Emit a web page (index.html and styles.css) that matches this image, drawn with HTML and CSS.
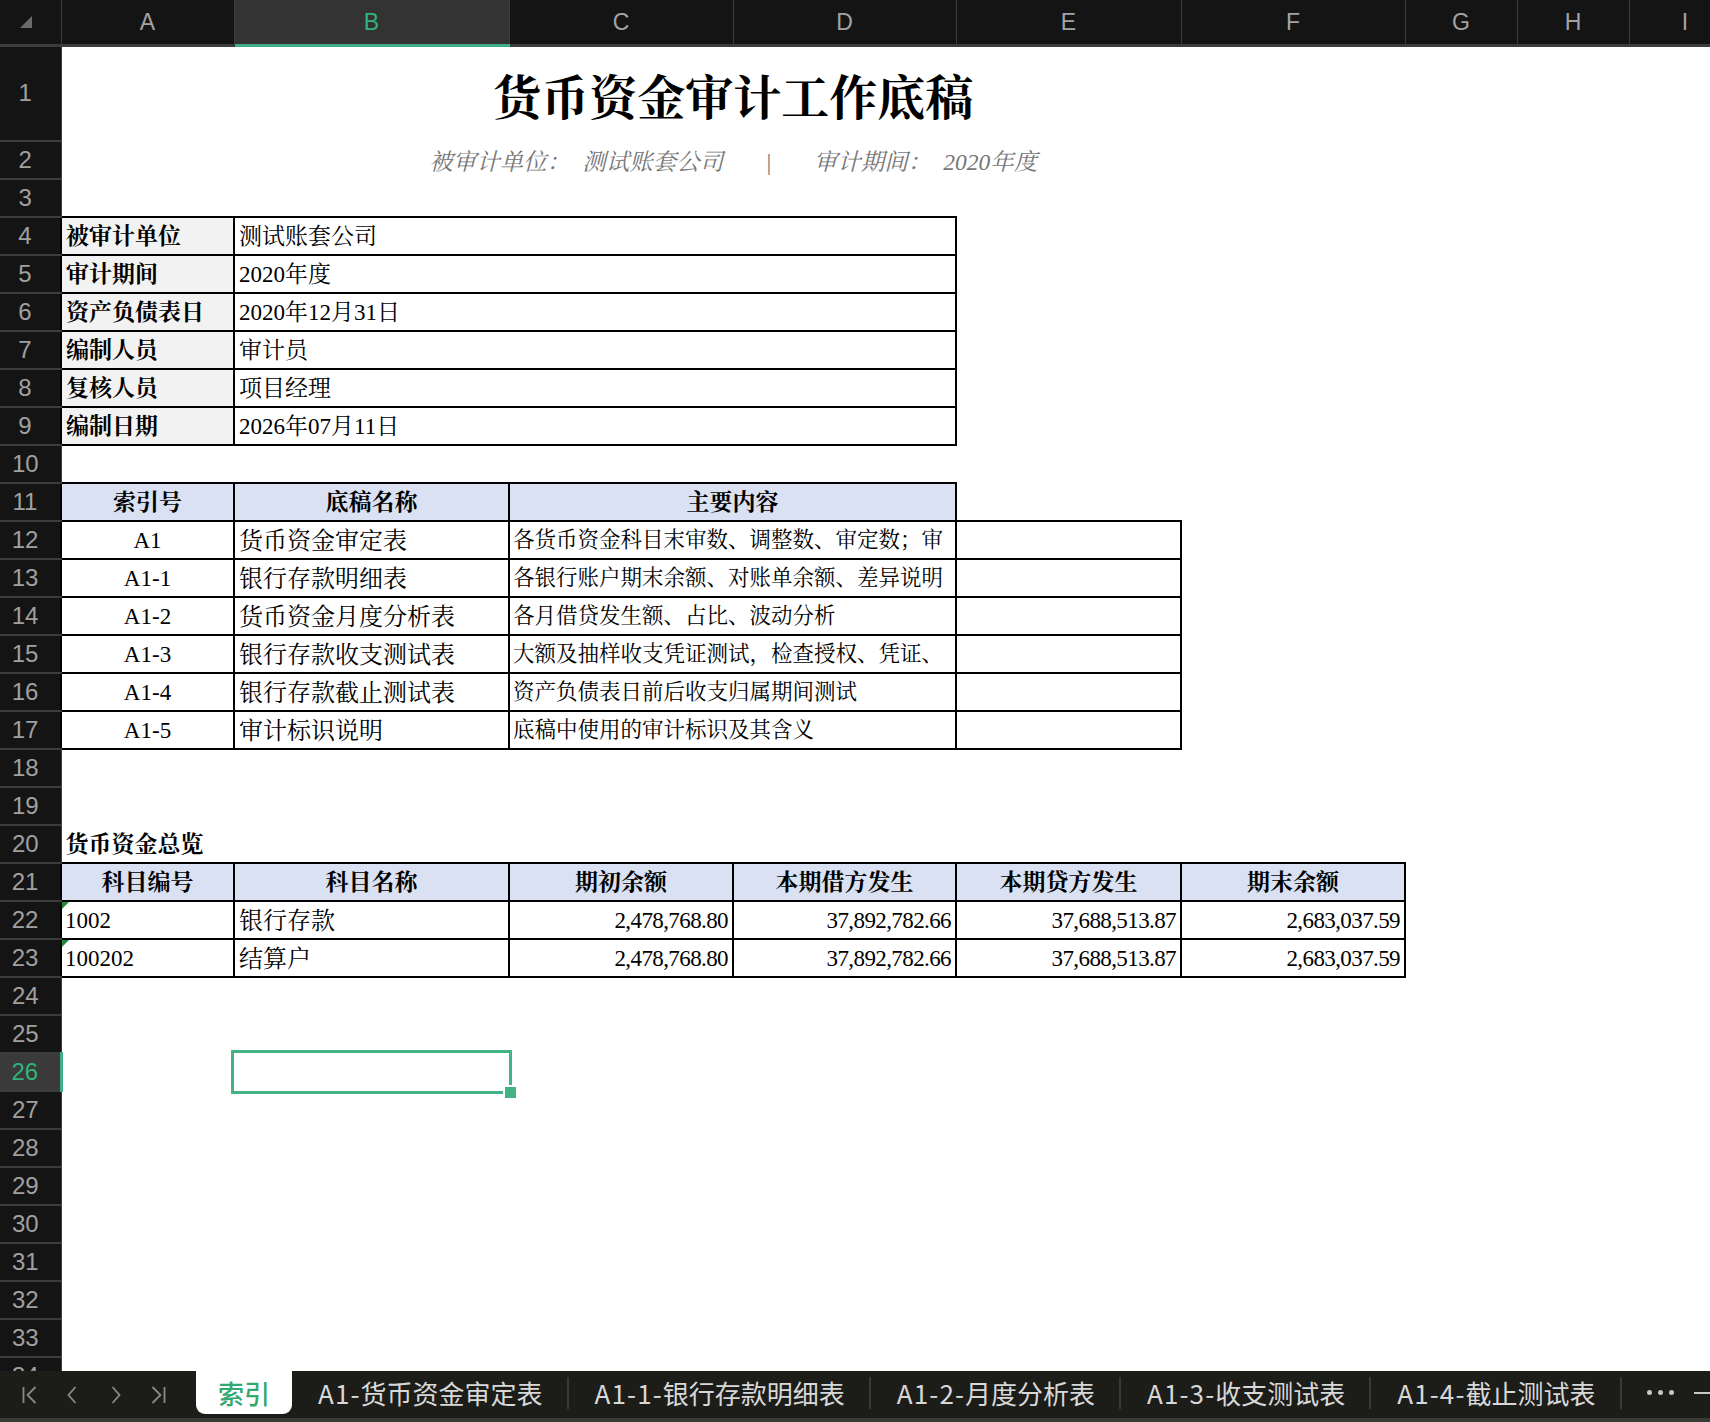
FILE: index.html
```html
<!DOCTYPE html>
<html lang="zh-CN">
<head>
  <meta charset="UTF-8" />
  <meta name="viewport" content="width=device-width, initial-scale=1.0" />
  <title>货币资金审计工作底稿</title>
  <link rel="stylesheet" href="styles.css">
</head>
<body>
  <div class="book">
    <div class="grid-wrap">
      <table class="sheet">
        <colgroup>
          <col class="w-rh"><col class="w-a"><col class="w-b"><col class="w-c"><col class="w-d">
          <col class="w-e"><col class="w-f"><col class="w-g"><col class="w-h"><col class="w-i">
        </colgroup>
        <thead>
          <tr class="colhead">
            <th class="corner"><span class="corner-tri"></span></th>
            <th>A</th><th class="cur">B</th><th>C</th><th>D</th><th>E</th><th>F</th><th>G</th><th>H</th><th>I</th>
          </tr>
        </thead>
        <tbody>
          <tr class="r-title">
            <th class="rh">1</th>
            <td colspan="6" class="title">货币资金审计工作底稿</td><td></td><td></td><td></td>
          </tr>
          <tr>
            <th class="rh">2</th>
            <td colspan="6" class="subtitle"><span>被审计单位：</span><span class="gap">测试账套公司</span><span class="bar">|</span><span>审计期间：</span><span class="gap">2020年度</span></td><td></td><td></td><td></td>
          </tr>
          <tr><th class="rh">3</th><td></td><td></td><td></td><td></td><td></td><td></td><td></td><td></td><td></td></tr>
          <tr><th class="rh">4</th><td class="bx lbl">被审计单位</td><td colspan="3" class="bx">测试账套公司</td><td></td><td></td><td></td><td></td><td></td></tr>
          <tr><th class="rh">5</th><td class="bx lbl">审计期间</td><td colspan="3" class="bx">2020年度</td><td></td><td></td><td></td><td></td><td></td></tr>
          <tr><th class="rh">6</th><td class="bx lbl">资产负债表日</td><td colspan="3" class="bx">2020年12月31日</td><td></td><td></td><td></td><td></td><td></td></tr>
          <tr><th class="rh">7</th><td class="bx lbl">编制人员</td><td colspan="3" class="bx">审计员</td><td></td><td></td><td></td><td></td><td></td></tr>
          <tr><th class="rh">8</th><td class="bx lbl">复核人员</td><td colspan="3" class="bx">项目经理</td><td></td><td></td><td></td><td></td><td></td></tr>
          <tr><th class="rh">9</th><td class="bx lbl">编制日期</td><td colspan="3" class="bx">2026年07月11日</td><td></td><td></td><td></td><td></td><td></td></tr>
          <tr><th class="rh">10</th><td></td><td></td><td></td><td></td><td></td><td></td><td></td><td></td><td></td></tr>
          <tr><th class="rh">11</th><td class="bx hd">索引号</td><td class="bx hd">底稿名称</td><td colspan="2" class="bx hd">主要内容</td><td></td><td></td><td></td><td></td><td></td></tr>
          <tr><th class="rh">12</th><td class="bx ctr">A1</td><td class="bx name">货币资金审定表</td><td colspan="2" class="bx desc">各货币资金科目末审数、调整数、审定数；审</td><td class="bx"></td><td></td><td></td><td></td><td></td></tr>
          <tr><th class="rh">13</th><td class="bx ctr">A1-1</td><td class="bx name">银行存款明细表</td><td colspan="2" class="bx desc">各银行账户期末余额、对账单余额、差异说明</td><td class="bx"></td><td></td><td></td><td></td><td></td></tr>
          <tr><th class="rh">14</th><td class="bx ctr">A1-2</td><td class="bx name">货币资金月度分析表</td><td colspan="2" class="bx desc">各月借贷发生额、占比、波动分析</td><td class="bx"></td><td></td><td></td><td></td><td></td></tr>
          <tr><th class="rh">15</th><td class="bx ctr">A1-3</td><td class="bx name">银行存款收支测试表</td><td colspan="2" class="bx desc">大额及抽样收支凭证测试，检查授权、凭证、</td><td class="bx"></td><td></td><td></td><td></td><td></td></tr>
          <tr><th class="rh">16</th><td class="bx ctr">A1-4</td><td class="bx name">银行存款截止测试表</td><td colspan="2" class="bx desc">资产负债表日前后收支归属期间测试</td><td class="bx"></td><td></td><td></td><td></td><td></td></tr>
          <tr><th class="rh">17</th><td class="bx ctr">A1-5</td><td class="bx name">审计标识说明</td><td colspan="2" class="bx desc">底稿中使用的审计标识及其含义</td><td class="bx"></td><td></td><td></td><td></td><td></td></tr>
          <tr><th class="rh">18</th><td></td><td></td><td></td><td></td><td></td><td></td><td></td><td></td><td></td></tr>
          <tr><th class="rh">19</th><td></td><td></td><td></td><td></td><td></td><td></td><td></td><td></td><td></td></tr>
          <tr><th class="rh">20</th><td class="sec">货币资金总览</td><td></td><td></td><td></td><td></td><td></td><td></td><td></td><td></td></tr>
          <tr><th class="rh">21</th><td class="bx hd">科目编号</td><td class="bx hd">科目名称</td><td class="bx hd">期初余额</td><td class="bx hd">本期借方发生</td><td class="bx hd">本期贷方发生</td><td class="bx hd">期末余额</td><td></td><td></td><td></td></tr>
          <tr><th class="rh">22</th><td class="bx code"><span class="txt-mark"></span>1002</td><td class="bx name">银行存款</td><td class="bx num">2,478,768.80</td><td class="bx num">37,892,782.66</td><td class="bx num">37,688,513.87</td><td class="bx num">2,683,037.59</td><td></td><td></td><td></td></tr>
          <tr><th class="rh">23</th><td class="bx code"><span class="txt-mark"></span>100202</td><td class="bx name">结算户</td><td class="bx num">2,478,768.80</td><td class="bx num">37,892,782.66</td><td class="bx num">37,688,513.87</td><td class="bx num">2,683,037.59</td><td></td><td></td><td></td></tr>
          <tr><th class="rh">24</th><td></td><td></td><td></td><td></td><td></td><td></td><td></td><td></td><td></td></tr>
          <tr><th class="rh">25</th><td></td><td></td><td></td><td></td><td></td><td></td><td></td><td></td><td></td></tr>
          <tr><th class="rh cur">26</th><td></td><td class="sel"><div class="sel-box"></div><div class="sel-handle"></div></td><td></td><td></td><td></td><td></td><td></td><td></td><td></td></tr>
          <tr><th class="rh">27</th><td></td><td></td><td></td><td></td><td></td><td></td><td></td><td></td><td></td></tr>
          <tr><th class="rh">28</th><td></td><td></td><td></td><td></td><td></td><td></td><td></td><td></td><td></td></tr>
          <tr><th class="rh">29</th><td></td><td></td><td></td><td></td><td></td><td></td><td></td><td></td><td></td></tr>
          <tr><th class="rh">30</th><td></td><td></td><td></td><td></td><td></td><td></td><td></td><td></td><td></td></tr>
          <tr><th class="rh">31</th><td></td><td></td><td></td><td></td><td></td><td></td><td></td><td></td><td></td></tr>
          <tr><th class="rh">32</th><td></td><td></td><td></td><td></td><td></td><td></td><td></td><td></td><td></td></tr>
          <tr><th class="rh">33</th><td></td><td></td><td></td><td></td><td></td><td></td><td></td><td></td><td></td></tr>
          <tr><th class="rh">34</th><td></td><td></td><td></td><td></td><td></td><td></td><td></td><td></td><td></td></tr>
        </tbody>
      </table>
    </div>

    <div class="tabbar">
      <div class="tab-nav">
        <svg class="nav-ico" viewBox="0 0 20 24"><path d="M4 4v16M16 4l-8 8 8 8"/></svg>
        <svg class="nav-ico" viewBox="0 0 20 24"><path d="M13 4l-7 8 7 8"/></svg>
        <svg class="nav-ico" viewBox="0 0 20 24"><path d="M7 4l7 8-7 8"/></svg>
        <svg class="nav-ico" viewBox="0 0 20 24"><path d="M4 4l8 8-8 8M16 4v16"/></svg>
      </div>
      <div class="tab active">索引</div>
      <div class="tab"><span class="pre">A1-</span>货币资金审定表</div>
      <span class="sep"></span>
      <div class="tab"><span class="pre">A1-1-</span>银行存款明细表</div>
      <span class="sep"></span>
      <div class="tab"><span class="pre">A1-2-</span>月度分析表</div>
      <span class="sep"></span>
      <div class="tab"><span class="pre">A1-3-</span>收支测试表</div>
      <span class="sep"></span>
      <div class="tab"><span class="pre">A1-4-</span>截止测试表</div>
      <span class="sep"></span>
      <div class="tab more"><i></i><i></i><i></i></div>
      <div class="tab minus"><i></i></div>
    </div>
  </div>
</body>
</html>
```

FILE: styles.css
```css
body {
  margin: 0;
  background: #141414;
  font-family: "Liberation Sans", Arial, sans-serif;
  overflow: hidden;
}
.book {
  width: 1710px;
  height: 1422px;
  display: flex;
  flex-direction: column;
  overflow: hidden;
}
.grid-wrap {
  height: 1371px;
  flex-shrink: 0;
  overflow: hidden;
  background: #fff;
}
.sheet {
  border-collapse: collapse;
  table-layout: fixed;
  width: 1741px;
  font-family: "Liberation Serif", "Noto Serif CJK SC", "Noto Sans CJK SC", serif;
  font-size: 23px;
  color: #000;
}
.w-rh { width: 61px; }
.w-a { width: 173px; }
.w-b { width: 275px; }
.w-c { width: 224px; }
.w-d { width: 223px; }
.w-e { width: 225px; }
.w-f { width: 224px; }
.w-g { width: 112px; }
.w-h { width: 112px; }
.w-i { width: 112px; }

/* column header */
.colhead th {
  height: 44px;
  padding: 0;
  background: #141414;
  color: #a3a3a3;
  font-family: "Liberation Sans", Arial, sans-serif;
  font-weight: normal;
  font-size: 23px;
  border-right: 1px solid #3c3c3c;
  border-bottom: 3px solid #3c3c3c;
}
.colhead th.cur {
  background: #333;
  color: #2fb47b;
  border-bottom: 3px solid #3fae84;
}
.colhead th.corner {
  position: relative;
}
.corner-tri {
  position: absolute;
  left: 20px;
  top: 16px;
  width: 0;
  height: 0;
  border-left: 12px solid transparent;
  border-bottom: 12px solid #6a6a6a;
}

/* rows */
.sheet tbody tr { height: 38px; }
.sheet tbody tr.r-title { height: 95px; }
.sheet td {
  padding: 3px 4px 0;
  white-space: nowrap;
  overflow: hidden;
  line-height: 1.2;
}
th.rh {
  background: #141414;
  color: #a0a0a0;
  font-family: "Liberation Sans", Arial, sans-serif;
  font-weight: normal;
  font-size: 24px;
  padding: 0 10px 0 0;
  border-bottom: 2px solid #3c3c3c;
  border-right: 1px solid #3c3c3c;
}
th.rh.cur {
  background: #3a3a3a;
  color: #2fb47b;
  border-right: 3px solid #3fae84;
}

/* title block */
.sheet td.title {
  text-align: center;
  font-size: 48px;
  font-weight: bold;
  padding-top: 10px;
}
.sheet td.subtitle {
  text-align: center;
  font-style: italic;
  color: #777;
  font-size: 23.5px;
  padding-top: 5px;
}
.subtitle .gap { margin-left: 12px; }
.subtitle .bar { margin: 0 42px; }

/* boxed cells */
.bx { border: 2px solid #000; }
.lbl {
  background: #f2f2f2;
  font-weight: bold;
}
.hd {
  background: #d9e1f2;
  font-weight: bold;
  text-align: center;
}
.ctr { text-align: center; }
.name { font-size: 24px; }
.sheet td.desc { font-size: 21.5px; padding-left: 3px; }
.sec { font-weight: bold; overflow: visible; }
.sheet td.code { position: relative; padding-left: 3px; }
.txt-mark {
  position: absolute;
  left: 0;
  top: 0;
  width: 0;
  height: 0;
  border-top: 7px solid #1f8a3e;
  border-right: 7px solid transparent;
}
.sheet td.num {
  text-align: right;
  letter-spacing: -0.6px;
  padding-right: 4px;
}

/* active cell */
.sheet td.sel {
  position: relative;
  overflow: visible;
}
.sel-box {
  position: absolute;
  left: -3px;
  top: -3px;
  right: -3px;
  bottom: -3px;
  border: 3px solid #43b284;
}
.sel-handle {
  position: absolute;
  right: -9px;
  bottom: -9px;
  width: 11px;
  height: 11px;
  background: #43b284;
  border: 2px solid #fff;
}

/* sheet tabs */
.tabbar {
  height: 47px;
  flex-shrink: 0;
  background: #1c1d19;
  border-bottom: 4px solid #393a35;
  display: flex;
  align-items: flex-start;
  font-family: "Noto Sans CJK SC", sans-serif;
  font-size: 26px;
  color: #d8d8d8;
  white-space: nowrap;
}
.tabbar > * { flex-shrink: 0; }
.tab-nav {
  width: 196px;
  height: 47px;
  display: flex;
  align-items: center;
  padding-left: 8px;
  box-sizing: border-box;
}
.nav-ico {
  width: 43px;
  height: 24px;
  fill: none;
  stroke: #8a8a8a;
  stroke-width: 1.8;
}
.tab {
  height: 43px;
  line-height: 43px;
  padding: 0 24px 0 26px;
}
.tab .pre { letter-spacing: 1.1px; }
.tab.active {
  background: #fff;
  color: #35a872;
  font-weight: 500;
  padding: 0 22px;
  border-radius: 0 0 9px 9px;
}
.sep {
  width: 2px;
  height: 32px;
  margin-top: 6px;
  background: #3a3a35;
}
.tab.more {
  display: flex;
  align-items: center;
  gap: 6px;
  padding: 0 20px 0 25px;
}
.tab.more i {
  width: 5px;
  height: 5px;
  border-radius: 50%;
  background: #c8c8c8;
}
.tab.minus {
  display: flex;
  align-items: center;
  padding: 0;
}
.tab.minus i {
  width: 16px;
  height: 2px;
  background: #c8c8c8;
}
```
